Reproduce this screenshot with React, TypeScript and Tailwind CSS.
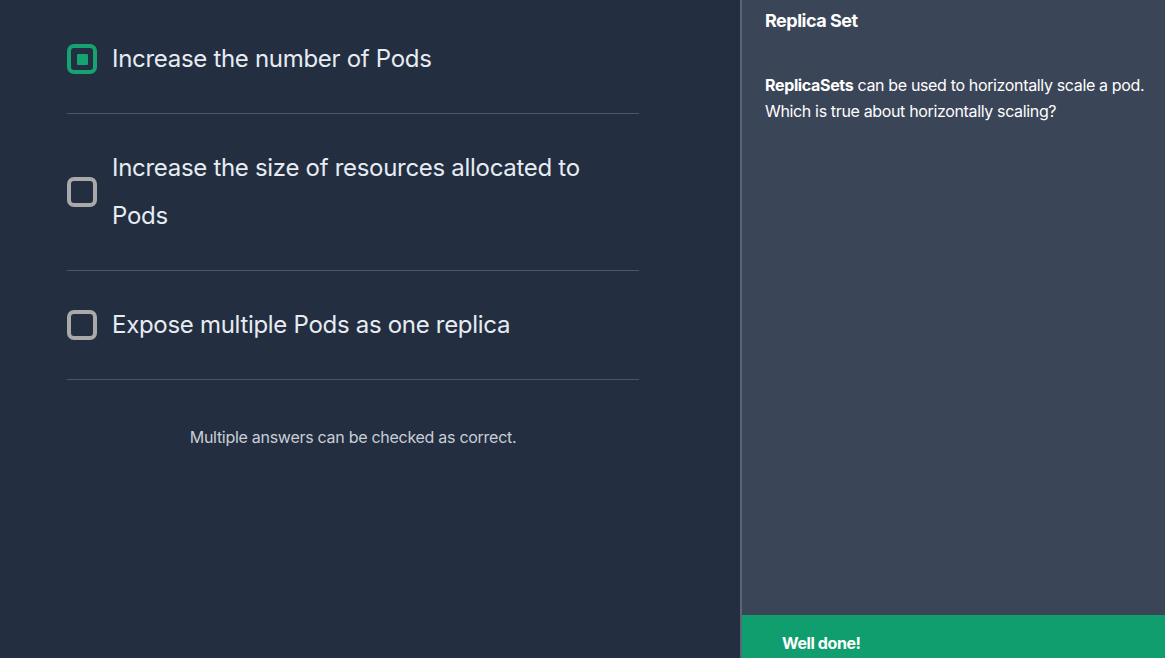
import React from "react";

function Box({ checked }: { checked?: boolean }) {
  if (checked) {
    return (
      <div className="w-[30px] h-[30px] shrink-0 rounded-[7px] border-[4px] border-[#15a372] flex items-center justify-center">
        <div className="w-[11px] h-[11px] bg-[#15a372] rounded-[1px]" />
      </div>
    );
  }
  return <div className="w-[30px] h-[30px] shrink-0 rounded-[7px] border-[4px] border-[#a9a9a9]" />;
}

function Option({ checked, children }: { checked?: boolean; children: React.ReactNode }) {
  return (
    <div className="flex items-center gap-[15px] py-[30px] border-b border-[#4b5567]">
      <Box checked={checked} />
      <div className="text-[24px] leading-[48px] text-[#e6ecf2] pr-[40px] tracking-[-0.3px]">{children}</div>
    </div>
  );
}

export default function App() {
  return (
    <div
      className="w-[1165px] h-[658px] flex overflow-hidden"
      style={{ fontFamily: "Inter, 'Noto Sans', sans-serif" }}
    >
      <div className="w-[740px] h-full bg-[#232e41] pl-[67px] pr-[101px] pt-[5px]">
        <Option checked>Increase the number of Pods</Option>
        <Option>Increase the size of resources allocated to Pods</Option>
        <Option>Expose multiple Pods as one replica</Option>
        <div className="text-center text-[16px] text-[#c9ced6] mt-[45px] tracking-[-0.28px]">
          Multiple answers can be checked as correct.
        </div>
      </div>
      <div className="w-[2px] h-full bg-[#5b6579]" />
      <div className="flex-1 h-full bg-[#3a4557] flex flex-col">
        <div className="flex-1 pl-[23px] pr-[10px] pt-[9px]">
          <div className="text-[18px] font-bold text-white leading-[24px] tracking-[-0.5px]">Replica Set</div>
          <p className="mt-[39px] text-[16px] leading-[26px] text-white tracking-[-0.35px]">
            <b className="font-bold">ReplicaSets</b> can be used to horizontally scale a pod. Which is true about horizontally scaling?
          </p>
        </div>
        <div className="h-[43px] bg-[#119e6f] pl-[40px] pt-[16px]">
          <div className="text-[16px] font-bold text-white leading-[24px] tracking-[-0.4px]">Well done!</div>
        </div>
      </div>
    </div>
  );
}
